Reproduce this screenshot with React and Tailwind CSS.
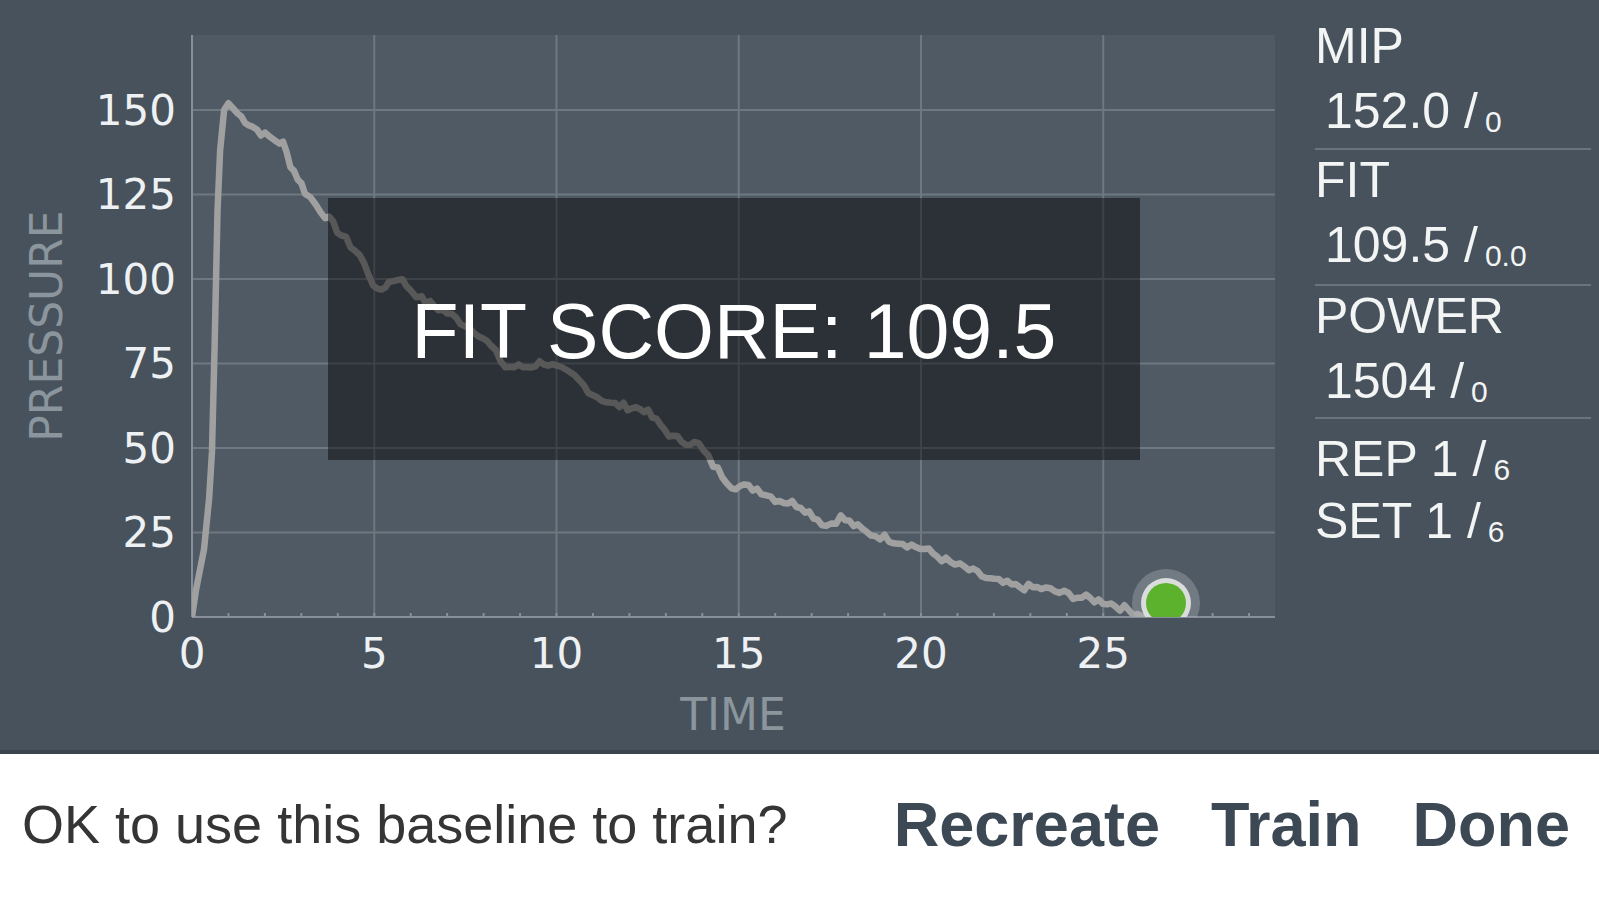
import React from "react";

// chart geometry (px)
const LEFT = 192;
const RIGHT = 1275;
const TOP = 35;
const BOTTOM = 617;
const tx = (t) => LEFT + t * 36.45;
const py = (p) => BOTTOM - p * 3.38;

const keyPoints = [
  [0, 0], [0.11, 8], [0.33, 20], [0.47, 35], [0.55, 49], [0.62, 80], [0.7, 120],
  [0.77, 138], [0.88, 150], [1.0, 152], [1.25, 149], [1.56, 146], [2.0, 142.5],
  [2.3, 141], [2.5, 140], [2.7, 134], [2.9, 130], [3.1, 126], [3.4, 122],
  [3.65, 119], [4.1, 113], [4.6, 107], [5.1, 96], [5.4, 99], [5.66, 100.5],
  [6.0, 97], [6.3, 94], [7.0, 90], [7.86, 84], [8.2, 80], [8.6, 74], [9.2, 74],
  [9.65, 75.5], [10.5, 71], [11.0, 66], [11.5, 63], [12.4, 61.5], [13.2, 53],
  [13.9, 51], [14.3, 45], [14.8, 39], [15.5, 38], [16.0, 35], [16.7, 33],
  [17.4, 27], [17.8, 29.5], [18.5, 25], [19.5, 22], [20.1, 20], [20.8, 16],
  [21.2, 14.5], [21.9, 11], [22.6, 9], [23.3, 8.5], [24.3, 6], [25.1, 4.4],
  [25.7, 2], [26.2, 0.3],
];

// add a bit of sensor noise so the trace looks like the real recording
const buildTrace = () => {
  let seed = 7;
  const rand = () => {
    seed = (seed * 9301 + 49297) % 233280;
    return seed / 233280 - 0.5;
  };
  const pts = [];
  for (let i = 0; i < keyPoints.length - 1; i++) {
    const [t0, p0] = keyPoints[i];
    const [t1, p1] = keyPoints[i + 1];
    const steps = Math.max(1, Math.round((t1 - t0) / 0.12));
    for (let s = 0; s < steps; s++) {
      const f = s / steps;
      const t = t0 + (t1 - t0) * f;
      let p = p0 + (p1 - p0) * f;
      if (t > 1.2) p += rand() * 2.2;
      pts.push([tx(t), py(Math.max(p, 0))]);
    }
  }
  const last = keyPoints[keyPoints.length - 1];
  pts.push([tx(last[0]), py(last[1])]);
  return pts.map(([x, y], i) => `${i ? "L" : "M"}${x.toFixed(1)} ${y.toFixed(1)}`).join(" ");
};

const tracePath = buildTrace();

const PressureChart = () => {
  const yTicks = [0, 25, 50, 75, 100, 125, 150];
  const xTicks = [0, 5, 10, 15, 20, 25];
  const minor = [];
  for (let t = 0; t <= 29.5; t += 1) minor.push(t);

  return (
    <svg width="1290" height="754" className="block font-['DejaVu_Sans',sans-serif]">
      <defs>
        <clipPath id="plot">
          <rect x={LEFT} y={TOP} width={RIGHT - LEFT} height={BOTTOM - TOP} />
        </clipPath>
      </defs>
      <rect x={LEFT} y={TOP} width={RIGHT - LEFT} height={BOTTOM - TOP} fill="#4f5a64" />

      {yTicks.map((v) => (
        <line key={"h" + v} x1={LEFT} x2={RIGHT} y1={py(v)} y2={py(v)} stroke="#6e7880" strokeWidth="2" />
      ))}
      {xTicks.map((v) => (
        <line key={"v" + v} x1={tx(v)} x2={tx(v)} y1={TOP} y2={BOTTOM} stroke="#6e7880" strokeWidth="2" />
      ))}

      {/* axes */}
      <line x1={LEFT} x2={LEFT} y1={TOP} y2={BOTTOM} stroke="#87909a" strokeWidth="2" />
      <line x1={LEFT} x2={RIGHT} y1={BOTTOM} y2={BOTTOM} stroke="#87909a" strokeWidth="2" />
      {minor.map((t) => (
        <line key={"m" + t} x1={tx(t)} x2={tx(t)} y1={BOTTOM - 4} y2={BOTTOM} stroke="#87909a" strokeWidth="2" />
      ))}

      <g clipPath="url(#plot)">
        <path d={tracePath} fill="none" stroke="#a0a0a0" strokeWidth="6.5" strokeLinejoin="round" strokeLinecap="round" />
        <circle cx="1166" cy="603" r="34" fill="#b4b9be" fillOpacity="0.35" />
        <circle cx="1166" cy="603" r="25" fill="#dadddc" />
        <circle cx="1166" cy="603" r="20" fill="#5cb22d" />
      </g>

      {yTicks.map((v) => (
        <text key={"yl" + v} x="176" y={py(v)} textAnchor="end" dominantBaseline="central" fontSize="42" fill="#eef1f3">
          {v}
        </text>
      ))}
      {xTicks.map((v) => (
        <text key={"xl" + v} x={tx(v)} y="668" textAnchor="middle" fontSize="42" fill="#eef1f3">
          {v}
        </text>
      ))}

      <text x="46" y="326" transform="rotate(-90 46 326)" textAnchor="middle" dominantBaseline="central" fontSize="44" fill="#8b959d">
        PRESSURE
      </text>
      <text x="733" y="730" textAnchor="middle" fontSize="44" fill="#8b959d">
        TIME
      </text>
    </svg>
  );
};

const Sub = ({ children }) => (
  <span className="text-[30px] leading-none relative top-[4px] pl-[7px]">{children}</span>
);

const Stat = ({ label, value, sub, pad }) => (
  <div className={`${pad} border-b-2 border-[#6b747d] leading-[60px]`}>
    <div>{label}</div>
    <div className="pl-[10px] mt-[5px]">
      {value} /<Sub>{sub}</Sub>
    </div>
  </div>
);

const App = () => {
  return (
    <div className="w-[1599px] h-[900px] flex flex-col font-['Liberation_Sans',Arial,sans-serif] bg-white overflow-hidden">
      <div className="h-[754px] flex bg-[#47525c] border-b-4 border-[#3a4550]">
        <div className="relative w-[1290px] shrink-0">
          <PressureChart />
          <div className="absolute left-[328px] top-[198px] w-[812px] h-[262px] bg-black/45 flex items-center justify-center">
            <span className="text-white text-[77px] leading-none pt-[4px]">FIT SCORE: 109.5</span>
          </div>
        </div>

        <div className="flex-1 pl-[25px] pr-[8px] pt-[16px] text-[50px] text-[#f3f4f4]">
          <Stat label="MIP" value="152.0" sub="0" pad="pb-[7px]" />
          <Stat label="FIT" value="109.5" sub="0.0" pad="pb-[9px]" />
          <Stat label="POWER" value="1504" sub="0" pad="pb-[6px]" />
          <div className="pt-[9px] leading-[62px]">
            <div>
              REP 1 /<Sub>6</Sub>
            </div>
            <div>
              SET 1 /<Sub>6</Sub>
            </div>
          </div>
        </div>
      </div>

      <div className="flex-1 flex items-center justify-between pl-[22px] pr-[29px] pb-[6px]">
        <span className="text-[54px] text-[#353535]">OK to use this baseline to train?</span>
        <div className="flex gap-[51px] text-[63px] font-bold text-[#3c4853]">
          <button>Recreate</button>
          <button>Train</button>
          <button>Done</button>
        </div>
      </div>
    </div>
  );
};

export default App;
